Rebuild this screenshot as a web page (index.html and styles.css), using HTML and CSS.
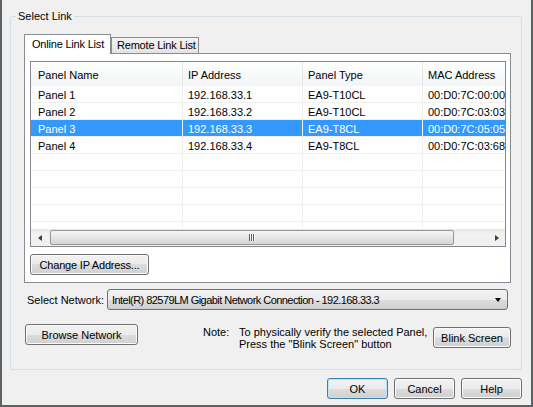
FILE: index.html
```html
<!DOCTYPE html>
<html lang="en">

<head>
    <meta charset="UTF-8">
    <title>Select Link</title>
    <link rel="stylesheet" href="styles.css">
</head>

<body>

    <div class="dialog">
        <fieldset class="group">
            <legend>Select Link</legend>

            <div class="tabs">
                <div class="tab-strip">
                    <div class="tab active">Online Link List</div>
                    <div class="tab">Remote Link List</div>
                </div>
                <div class="tab-page">
                    <div class="list">
                        <div class="list-view">
                            <table>
                                <colgroup>
                                    <col style="width: 151px">
                                    <col style="width: 120px">
                                    <col style="width: 120px">
                                    <col style="width: 120px">
                                </colgroup>
                                <thead>
                                    <tr>
                                        <th>Panel Name</th>
                                        <th>IP Address</th>
                                        <th>Panel Type</th>
                                        <th>MAC Address</th>
                                    </tr>
                                </thead>
                                <tbody>
                                    <tr>
                                        <td>Panel 1</td>
                                        <td>192.168.33.1</td>
                                        <td>EA9-T10CL</td>
                                        <td>00:D0:7C:00:00:41</td>
                                    </tr>
                                    <tr>
                                        <td>Panel 2</td>
                                        <td>192.168.33.2</td>
                                        <td>EA9-T10CL</td>
                                        <td>00:D0:7C:03:03:12</td>
                                    </tr>
                                    <tr class="selected">
                                        <td>Panel 3</td>
                                        <td>192.168.33.3</td>
                                        <td>EA9-T8CL</td>
                                        <td>00:D0:7C:05:05:2A</td>
                                    </tr>
                                    <tr>
                                        <td>Panel 4</td>
                                        <td>192.168.33.4</td>
                                        <td>EA9-T8CL</td>
                                        <td>00:D0:7C:03:68:1B</td>
                                    </tr>
                                    <tr><td></td><td></td><td></td><td></td></tr>
                                    <tr><td></td><td></td><td></td><td></td></tr>
                                    <tr><td></td><td></td><td></td><td></td></tr>
                                    <tr><td></td><td></td><td></td><td></td></tr>
                                    <tr><td></td><td></td><td></td><td></td></tr>
                                    <tr><td></td><td></td><td></td><td></td></tr>
                                </tbody>
                            </table>
                        </div>
                        <!-- horizontal scroll bar -->
                        <div class="hscroll">
                            <div class="sb-arrow"><span class="arrow-left"></span></div>
                            <div class="sb-track">
                                <div class="sb-thumb"><span class="grip"></span></div>
                            </div>
                            <div class="sb-arrow"><span class="arrow-right"></span></div>
                        </div>
                    </div>
                    <button class="btn btn-change">Change IP Address...</button>
                </div>
            </div>

            <div class="network-row">
                <span class="network-label">Select Network:</span>
                <div class="combo">
                    <span class="combo-text">Intel(R) 82579LM Gigabit Network Connection - 192.168.33.3</span>
                    <span class="combo-arrow"></span>
                </div>
            </div>

            <div class="note-row">
                <button class="btn btn-browse">Browse Network</button>
                <div class="note">
                    <span class="note-label">Note:</span>
                    <span class="note-text">To physically verify the selected Panel,<br>Press the "Blink Screen" button</span>
                </div>
                <button class="btn btn-blink">Blink Screen</button>
            </div>
        </fieldset>

        <div class="footer-buttons">
            <button class="btn btn-footer btn-default">OK</button>
            <button class="btn btn-footer">Cancel</button>
            <button class="btn btn-footer">Help</button>
        </div>
    </div>

</body>

</html>
```

FILE: styles.css
```css
* {
    box-sizing: border-box;
}

html,
body {
    margin: 0;
    padding: 0;
    background-color: #f0f0f0;
}

body {
    font-family: 'Liberation Sans', Arial, sans-serif;
    font-size: 11px;
    color: #000;
}

.dialog {
    width: 533px;
    height: 407px;
    border: 2px solid #5f6368;
    border-top: none;
    padding: 10px 9px 0 8px;
}

/* group box */
.group {
    margin: 0;
    min-width: 0;
    padding: 11px 10px 19px 5px;
    border: 1px solid #d5dfe5;
    border-radius: 3px;
}

.group legend {
    padding: 0 2px;
    line-height: 13px;
}

/* tab control */
.tabs {
    margin-left: 8px;
}

.tab-strip {
    display: flex;
    align-items: flex-end;
    height: 19px;
}

.tab {
    height: 16px;
    width: 88px;
    padding-left: 5px;
    line-height: 15px;
    letter-spacing: -0.2px;
    white-space: nowrap;
    overflow: hidden;
    border: 1px solid #898c95;
    border-bottom: none;
    background: linear-gradient(#f3f3f3, #e3e3e3);
}

.tab.active {
    position: relative;
    z-index: 1;
    height: 20px;
    width: 87px;
    margin-bottom: -1px;
    padding-left: 7px;
    line-height: 18px;
    background: #fff;
}

.tab-page {
    border: 1px solid #898c95;
    background: #fff;
    padding: 7px 4px 7px 5px;
}

/* list view */
.list {
    height: 186px;
    border: 1px solid #828790;
    background: #fff;
}

.list-view {
    height: 167px;
    overflow: hidden;
}

.list-view table {
    width: 511px;
    table-layout: fixed;
    border-collapse: separate;
    border-spacing: 0;
}

.list-view th {
    height: 24px;
    padding: 1px 0 0 7px;
    text-align: left;
    font-weight: normal;
    white-space: nowrap;
    background: linear-gradient(#ffffff, #f3f4f6);
}

.list-view th + th {
    padding-left: 5px;
    border-left: 1px solid #e5e5e5;
}

.list-view tbody tr {
    height: 17px;
}

.list-view td {
    padding: 0 0 0 7px;
    line-height: 13px;
    vertical-align: bottom;
    white-space: nowrap;
    overflow: hidden;
    border-bottom: 1px solid #f0f0f0;
}

.list-view td + td {
    padding-left: 5px;
    border-left: 1px solid #f0f0f0;
}

.list-view tr.selected td {
    background: #3399ff;
    color: #fff;
}

/* scroll bar */
.hscroll {
    display: flex;
    height: 17px;
    background: linear-gradient(#e6e6e6, #f2f2f2 30%, #f0f0f0);
}

.sb-arrow {
    width: 17px;
    display: flex;
    align-items: center;
    justify-content: center;
}

.arrow-left {
    border-top: 3.5px solid transparent;
    border-bottom: 3.5px solid transparent;
    border-right: 4px solid #3c3c3c;
}

.arrow-right {
    border-top: 3.5px solid transparent;
    border-bottom: 3.5px solid transparent;
    border-left: 4px solid #3c3c3c;
}

.sb-track {
    flex: 1;
    padding: 1px 2px;
}

.sb-thumb {
    width: 404px;
    height: 15px;
    border: 1px solid #979797;
    border-radius: 2px;
    background: linear-gradient(#f4f4f4, #e6e6e6 50%, #d4d4d4);
    display: flex;
    align-items: center;
    justify-content: center;
}

.grip {
    width: 6px;
    height: 7px;
    background: repeating-linear-gradient(90deg, #5e5e5e 0 1px, #fafafa 1px 2px);
}

/* buttons */
.btn {
    display: block;
    height: 21px;
    padding: 0;
    font: inherit;
    color: #000;
    white-space: nowrap;
    border: 1px solid #707070;
    border-radius: 3px;
    background: linear-gradient(#f2f2f2 0%, #ebebeb 50%, #dddddd 50%, #cfcfcf 100%);
    box-shadow: inset 0 0 0 1px #fbfbfb;
}

.btn-change {
    width: 119px;
    margin-top: 7px;
    letter-spacing: -0.2px;
}

.btn-default {
    border-color: #3c7fb1;
    box-shadow: inset 0 0 0 1px #b9e4f8;
}

/* network selection */
.network-row {
    display: flex;
    align-items: center;
    margin-top: 6px;
    height: 21px;
}

.network-label {
    margin-left: 11px;
    margin-right: 3px;
}

.combo {
    flex: 1;
    height: 21px;
    margin-right: 3px;
    display: flex;
    align-items: center;
    padding: 0 6px 0 4px;
    border: 1px solid #707070;
    border-radius: 3px;
    background: linear-gradient(#f2f2f2 0%, #ebebeb 50%, #dddddd 50%, #cfcfcf 100%);
}

.combo-text {
    flex: 1;
    white-space: nowrap;
    letter-spacing: -0.55px;
}

.combo-arrow {
    border-left: 3.5px solid transparent;
    border-right: 3.5px solid transparent;
    border-top: 4px solid #000;
}

/* note row */
.note-row {
    display: flex;
    align-items: flex-start;
    margin-top: 14px;
}

.btn-browse {
    width: 113px;
    margin-left: 9px;
}

.note {
    display: flex;
    margin-top: 2px;
    margin-left: 65px;
    line-height: 12px;
}

.note-label {
    width: 36px;
}

.btn-blink {
    width: 78px;
    margin-top: 3px;
    margin-left: auto;
}

/* dialog buttons */
.footer-buttons {
    display: flex;
    justify-content: flex-end;
    gap: 6px;
    margin-top: 8px;
}

.btn-footer {
    width: 61px;
}
```
